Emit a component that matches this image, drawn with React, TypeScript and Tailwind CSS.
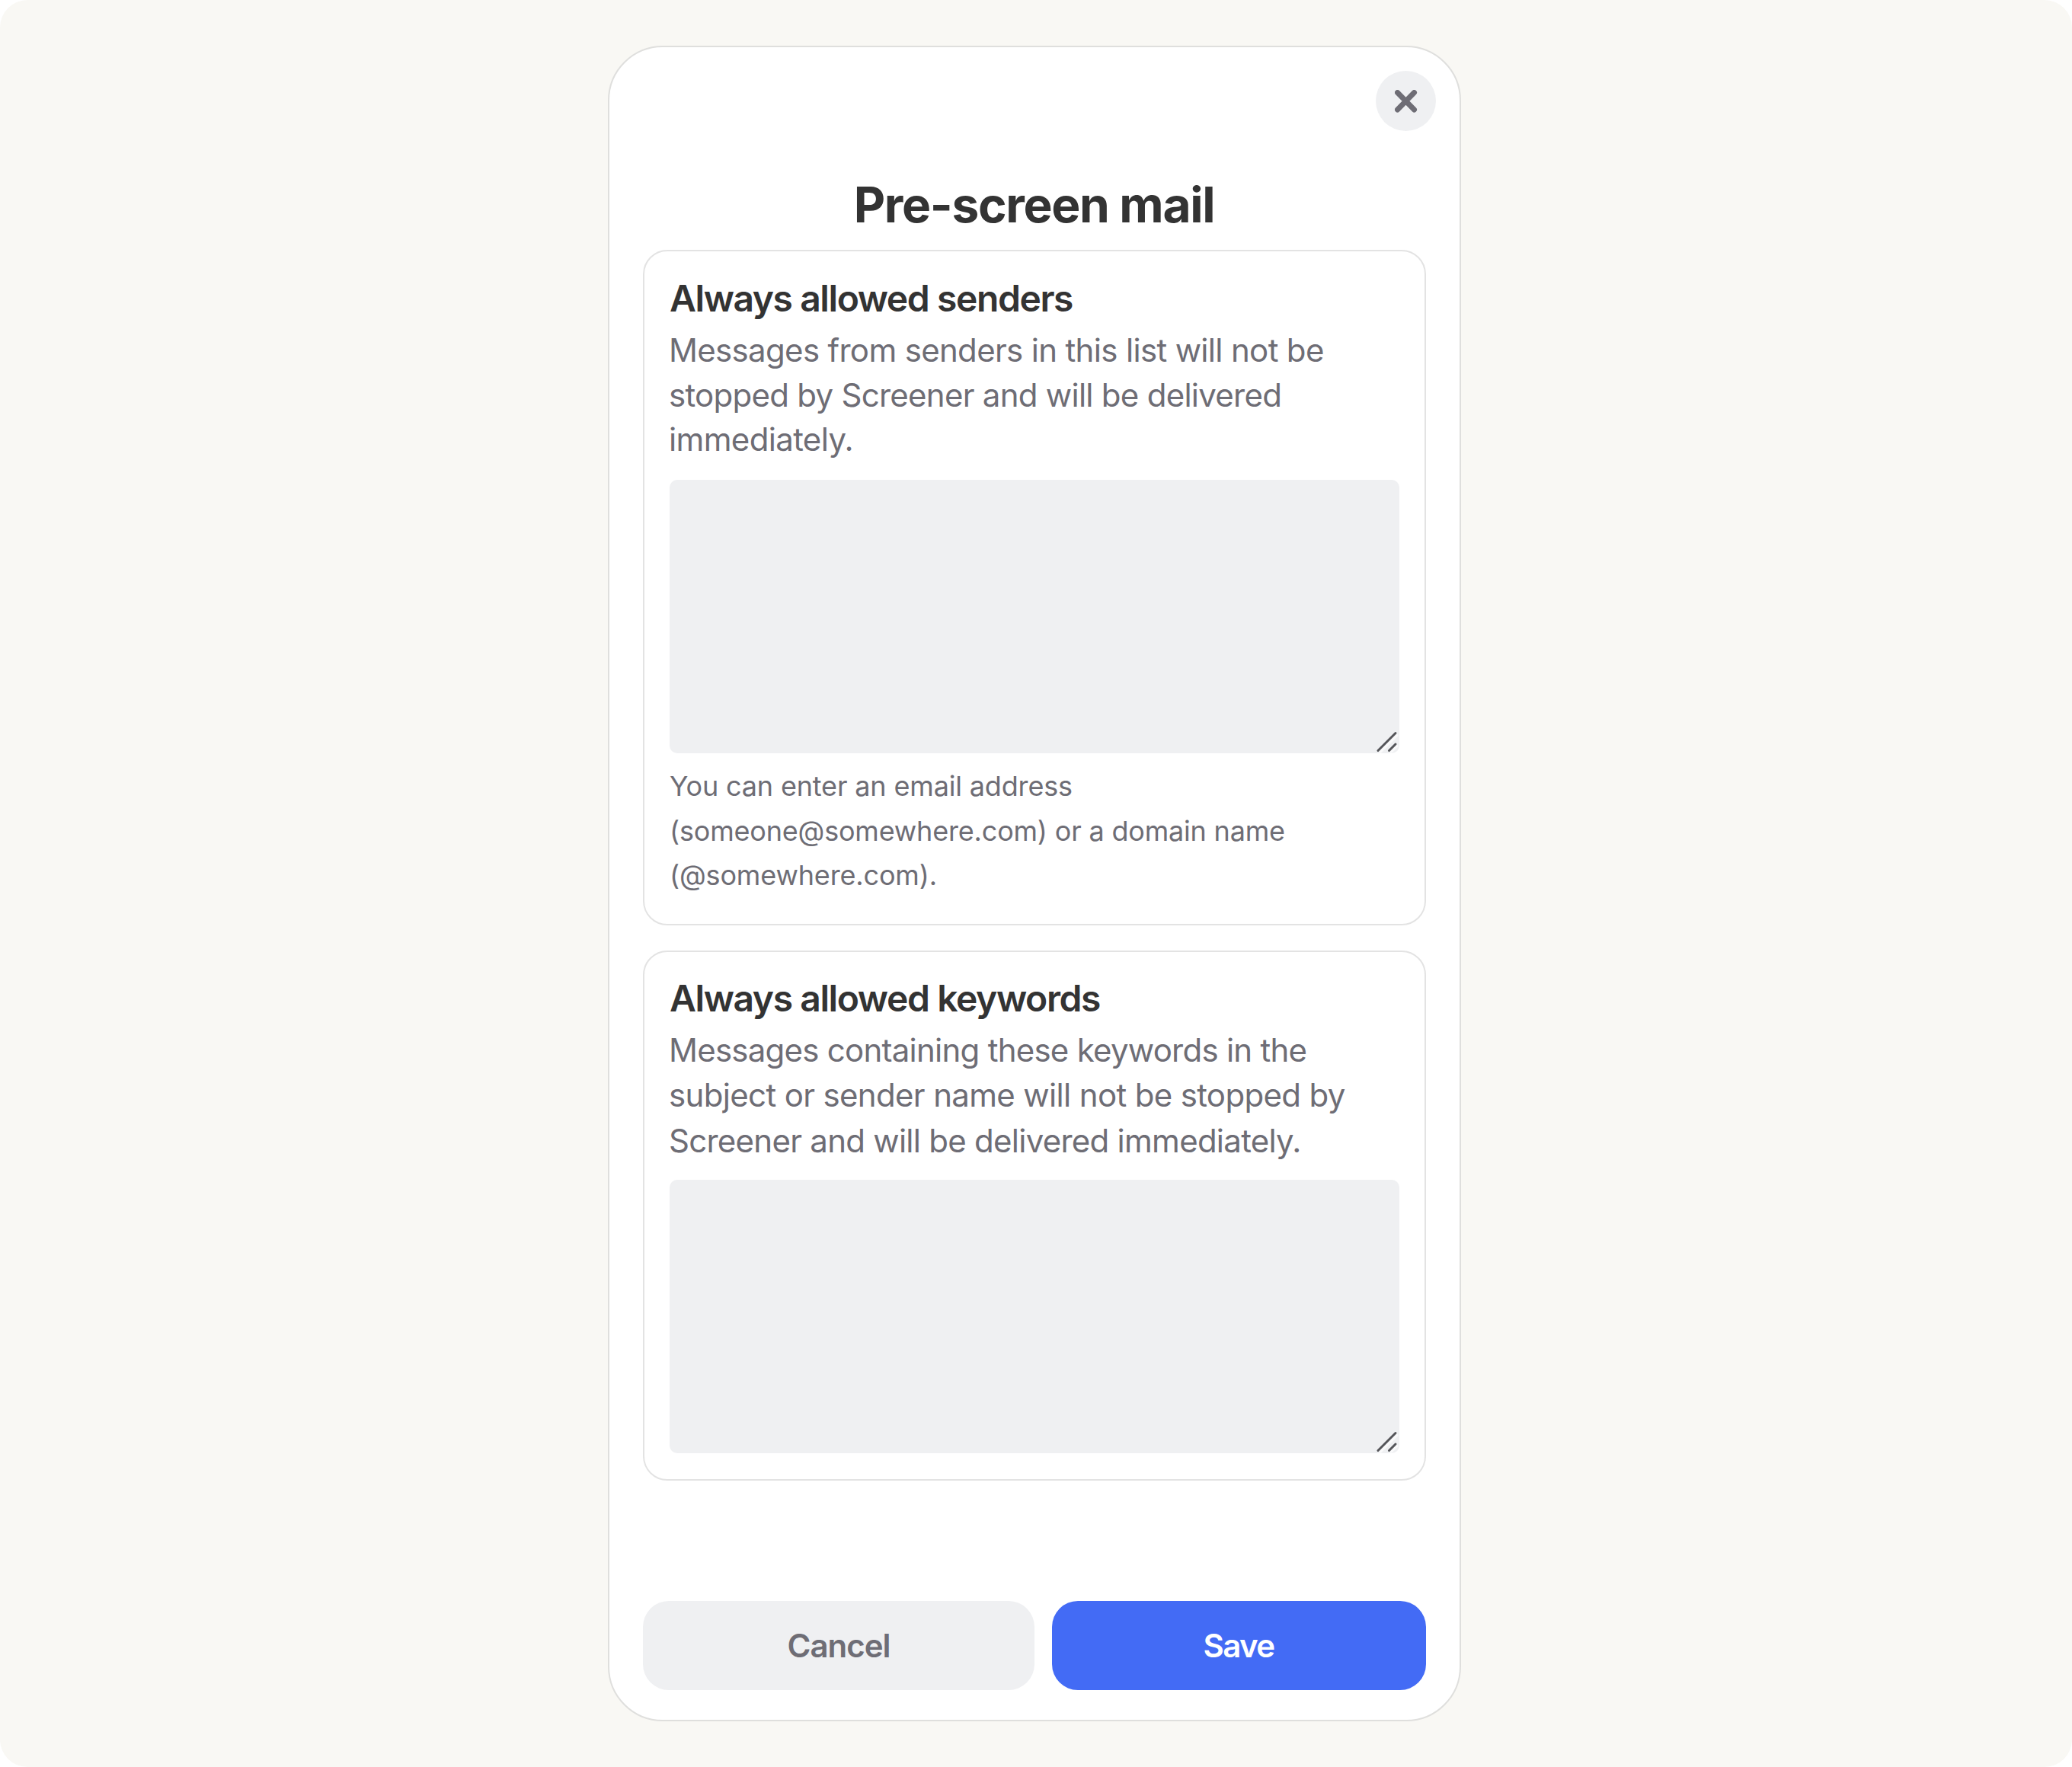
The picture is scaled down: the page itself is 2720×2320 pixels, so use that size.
import { useState } from "react";
import clsx from "clsx";

type Line = { text: string; cls: string };

// One entry per rendered line, each with its own tracking
const SENDERS_DESC: Line[] = [
  { text: "Messages from senders in this list will not be", cls: "tracking-[-0.67px]" },
  { text: "stopped by Screener and will be delivered", cls: "tracking-[-0.73px]" },
  { text: "immediately.", cls: "tracking-[-0.65px]" },
];

const SENDERS_HINT: Line[] = [
  { text: "You can enter an email address", cls: "ml-px tracking-[-0.16px]" },
  { text: "(someone@somewhere.com) or a domain name", cls: "ml-px tracking-[-0.19px]" },
  { text: "(@somewhere.com).", cls: "ml-px tracking-[-0.16px]" },
];

const KEYWORDS_DESC: Line[] = [
  { text: "Messages containing these keywords in the", cls: "tracking-[-0.75px]" },
  { text: "subject or sender name will not be stopped by", cls: "tracking-[-0.66px]" },
  { text: "Screener and will be delivered immediately.", cls: "tracking-[-0.74px]" },
];

function Lines({ lines, className }: { lines: Line[]; className: string }) {
  return (
    <p className={clsx("-ml-px whitespace-nowrap text-[#6e6d75]", className)}>
      {lines.map((l) => (
        <span key={l.text} className={clsx("block", l.cls)}>
          {l.text}
        </span>
      ))}
    </p>
  );
}

function ListInput({ label }: { label: string }) {
  const [value, setValue] = useState("");
  return (
    <div className="relative h-[359px] w-[958px]">
      <textarea
        aria-label={label}
        value={value}
        onChange={(e) => setValue(e.target.value)}
        className="block size-full resize-none rounded-[10px] bg-[#eff0f2] p-4 text-[42px] outline-none"
      />
      {/* resize grip */}
      <svg
        className="pointer-events-none absolute right-0 bottom-0"
        width="34"
        height="34"
        viewBox="0 0 34 34"
        fill="none"
        strokeLinecap="round"
      >
        <path d="M9 32.5 31 10.5M23 32.5 31 24.5" stroke="#fafafb" strokeWidth="3" />
        <path d="M6 30.5 29 7.5M20.5 30.5 29 22" stroke="#55565a" strokeWidth="3" />
      </svg>
    </div>
  );
}

export default function App() {
  return (
    <div className="h-[2320px] w-[2720px] overflow-hidden bg-white font-['Inter',sans-serif]">
      <div className="h-full rounded-[36px] bg-[#f9f8f4] pt-[60px] pl-[798px]">
        <div className="relative h-[2200px] w-[1120px] rounded-[72px] border-2 border-[#dfdfdd] bg-white pt-[169px] pl-[44px]">
          <button
            aria-label="Close"
            className="absolute top-[31px] right-[31px] flex size-[79px] items-center justify-center rounded-full bg-[#eff0f2]"
          >
            <svg width="30" height="30" viewBox="0 0 30 30" fill="none">
              <path
                d="M3.5 3.5 25.5 26M25.5 3.5 3.5 26"
                stroke="#6e6d75"
                strokeWidth="7"
                strokeLinecap="round"
              />
            </svg>
          </button>

          <h1 className="w-[1027px] text-center text-[64px] leading-[75px] font-bold tracking-[-1.335px] text-[#333]">
            Pre-screen mail
          </h1>

          <section className="mt-[22px] h-[887px] w-[1028px] rounded-[32px] border-2 border-[#e3e3e3] pt-[32px] pl-[33px]">
            <h2 className="text-[48px] leading-[60px] font-semibold tracking-[-1.42px] text-[#333]">
              Always allowed senders
            </h2>
            <Lines lines={SENDERS_DESC} className="mt-[9px] h-[199px] text-[42px] leading-[58.5px]" />
            <ListInput label="Always allowed senders" />
            <Lines lines={SENDERS_HINT} className="mt-[14px] text-[36px] leading-[58.7px]" />
          </section>

          <section className="mt-[33px] h-[696px] w-[1028px] rounded-[32px] border-2 border-[#e3e3e3] pt-[31px] pl-[33px]">
            <h2 className="text-[48px] leading-[60px] font-semibold tracking-[-1.41px] text-[#333]">
              Always allowed keywords
            </h2>
            <Lines lines={KEYWORDS_DESC} className="mt-[8px] h-[200px] text-[42px] leading-[59.3px]" />
            <ListInput label="Always allowed keywords" />
          </section>

          <div className="mt-[158px] flex w-[1028px] gap-[23px]">
            <button className="h-[117px] w-[514px] rounded-[34px] bg-[#eff0f2] pb-px text-[42px] font-semibold tracking-[-1px] text-[#6e6d75]">
              Cancel
            </button>
            <button className="h-[117px] flex-1 rounded-[34px] bg-[#436bf5] pr-px pb-px text-[42px] font-semibold tracking-[-1.6px] text-white">
              Save
            </button>
          </div>
        </div>
      </div>
    </div>
  );
}
